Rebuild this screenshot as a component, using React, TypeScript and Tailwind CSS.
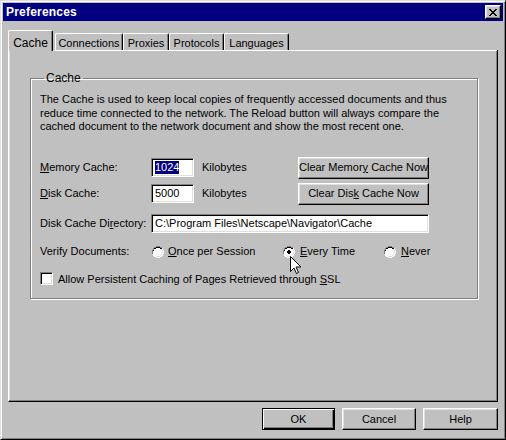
import React from 'react';

const raised =
  'border border-t-white border-l-white border-r-black border-b-black shadow-[inset_-1px_-1px_0_#808080,inset_1px_1px_0_#dfdfdf]';
const sunken =
  'border border-t-[#808080] border-l-[#808080] border-r-white border-b-white shadow-[inset_1px_1px_0_#000,inset_-1px_-1px_0_#dfdfdf]';

const U = ({ children }: { children: React.ReactNode }) => <span className="underline underline-offset-[1px]">{children}</span>;

const Radio = ({ checked }: { checked?: boolean }) => (
  <svg width="12" height="12" viewBox="0 0 12 12" className="shrink-0">
    <path d="M4 0h4v1h2v1h1v2h1v4h-1v2h-1v1H8v1H4v-1H2v-1H1V8H0V4h1V2h1V1h2z" fill="#fff" />
    <path d="M4 0h4v1h2v1H8V1H4v1H2v2H1v4H0V4h1V2h1V1h2z" fill="#808080" />
    <path d="M4 1h4v1h2v1H8V2H4v1H2v2H1v3H1V4h1V2h2z" fill="#000" />
    <path d="M10 2h1v2h-1zM11 4h1v4h-1zM10 8h1v2h-1zM8 10h2v1H8zM4 11h4v1H4zM2 10h2v1H2z" fill="#fff" />
    <path d="M9 3h1v1h-1zM10 4h1v4h-1zM9 8h1v1h-1zM8 9h1v1H8zM4 10h4v1H4zM3 9h1v1H3z" fill="#dfdfdf" />
    {checked && <path d="M5 4h2v1h1v2H7v1H5V7H4V5h1z" fill="#000" />}
  </svg>
);

const Btn = ({ children, className = '' }: { children: React.ReactNode; className?: string }) => (
  <button className={`${raised} bg-[#c0c0c0] h-[22px] flex items-center justify-center text-black ${className}`}>
    {children}
  </button>
);

const tabs = [
  { name: 'Cache', w: 'w-[45px]' },
  { name: 'Connections', w: 'w-[68px]' },
  { name: 'Proxies', w: 'w-[46px]' },
  { name: 'Protocols', w: 'w-[55px]' },
  { name: 'Languages', w: 'w-[65px]' },
];

export default function App() {
  return (
    <div
      className="w-[506px] h-[440px] bg-[#c0c0c0] flex flex-col border border-t-[#dfdfdf] border-l-[#dfdfdf] border-r-black border-b-black shadow-[inset_1px_1px_0_#fff,inset_-1px_-1px_0_#808080] p-[2px] text-[11px] text-black select-none"
      style={{ fontFamily: '"Liberation Sans", Arial, sans-serif' }}
    >
      {/* title bar */}
      <div className="h-[18px] bg-[#000080] flex items-center justify-between pl-[3px] pr-[2px]">
        <span className="text-white font-bold text-[12px] tracking-[0.2px]">Preferences</span>
        <button className={`${raised} bg-[#c0c0c0] w-[16px] h-[14px] flex items-center justify-center`}>
          <svg width="8" height="7" viewBox="0 0 8 7">
            <path d="M0 0h2v1h1v1h2V1h1V0h2v1H7v1H6v1H5v1h1v1h1v1h1v1H6V6H5V5H3v1H2v1H0V6h1V5h1V4h1V3H2V2H1V1H0z" fill="#000" />
          </svg>
        </button>
      </div>

      {/* tabs */}
      <div className="flex items-end h-[29px] pl-[5px] pt-[8px] relative z-10">
        {tabs.map((t, i) =>
          i === 0 ? (
            <div
              key={t.name}
              className={`${t.w} h-[21px] mb-[-1px] bg-[#c0c0c0] border-t border-l border-r border-t-white border-l-white border-r-black shadow-[inset_-1px_0_0_#808080] rounded-t-[2px] flex items-start justify-center pt-[3px] text-[12px]`}
            >
              {t.name}
            </div>
          ) : (
            <div
              key={t.name}
              className={`${t.w} h-[17px] bg-[#c0c0c0] border-t border-l border-r border-t-white border-l-white border-r-black shadow-[inset_-1px_0_0_#808080] rounded-t-[2px] flex items-start justify-center pt-[1px] text-[11px] ${i === 1 ? 'ml-[2px]' : ''}`}
            >
              {t.name}
            </div>
          )
        )}
      </div>

      {/* tab panel */}
      <div className={`${raised} mx-[5px] h-[352px] bg-[#c0c0c0] border-t-0 pt-[24px] px-[21px] relative`}>
        <div className="absolute left-[46px] right-0 top-0 h-px bg-white" />
        <div className="absolute left-0 w-[1px] top-0 h-px bg-white" />
        {/* group box */}
        <fieldset className="border border-[#808080] shadow-[1px_1px_0_#fff,inset_1px_1px_0_#fff] h-[227px] w-[448px] px-[9px] pt-0 mt-[-2px]">
          <legend className="px-[2px] ml-[4px] text-[12px] leading-[12px]">Cache</legend>
          <p className="text-[11px] leading-[13.5px] mt-[9px]">
            The Cache is used to keep local copies of frequently accessed documents and thus
            <br />
            reduce time connected to the network. The Reload button will always compare the
            <br />
            cached document to the network document and show the most recent one.
          </p>

          <div className="mt-[23px] flex items-center w-[389px]">
            <span className="w-[111px]">
              <U>M</U>emory Cache:
            </span>
            <div className={`${sunken} bg-white w-[43px] h-[19px] flex items-center px-[3px]`}>
              <span className="bg-[#000080] text-white leading-[13px]">1024</span>
            </div>
            <span className="ml-[8px] flex-1">Kilobytes</span>
            <Btn className="w-[131px]">
              Clear Memor<U>y</U>&nbsp;Cache Now
            </Btn>
          </div>

          <div className="mt-[4px] flex items-center w-[389px]">
            <span className="w-[111px]">
              <U>D</U>isk Cache:
            </span>
            <div className={`${sunken} bg-white w-[43px] h-[19px] flex items-center px-[3px]`}>
              <span className="leading-[13px]">5000</span>
            </div>
            <span className="ml-[8px] flex-1">Kilobytes</span>
            <Btn className="w-[131px]">
              Clear Dis<U>k</U>&nbsp;Cache Now
            </Btn>
          </div>

          <div className="mt-[9px] flex items-center">
            <span className="w-[111px]">
              Disk Cache Di<U>r</U>ectory:
            </span>
            <div className={`${sunken} bg-white w-[278px] h-[19px] flex items-center px-[3px]`}>
              C:\Program Files\Netscape\Navigator\Cache
            </div>
          </div>

          <div className="mt-[12px] flex items-center h-[14px]">
            <span className="w-[112px]">Verify Documents:</span>
            <div className="w-[131px] flex items-center gap-[4px]">
              <Radio />
              <span>
                <U>O</U>nce per Session
              </span>
            </div>
            <div className="w-[101px] flex items-center gap-[5px]">
              <Radio checked />
              <span>
                <U>E</U>very Time
              </span>
            </div>
            <div className="flex items-center gap-[5px]">
              <Radio />
              <span>
                <U>N</U>ever
              </span>
            </div>
          </div>

          <div className="mt-[12px] flex items-center gap-[5px]">
            <div className={`${sunken} bg-white w-[13px] h-[13px]`} />
            <span>
              Allow Persistent Caching of Pages Retrieved through <U>S</U>SL
            </span>
          </div>
        </fieldset>
      </div>

      {/* bottom buttons */}
      <div className="flex justify-end gap-[7px] mt-[6px] pr-[5px]">
        <button className="w-[73px] h-[22px] border border-black bg-[#c0c0c0] flex items-center justify-center shadow-[inset_1px_1px_0_#fff,inset_-1px_-1px_0_#000,inset_-2px_-2px_0_#808080]">
          OK
        </button>
        <Btn className="w-[74px]">Cancel</Btn>
        <Btn className="w-[75px]">Help</Btn>
      </div>

      {/* mouse pointer */}
      <svg width="12" height="19" viewBox="0 0 12 19" className="absolute left-[290px] top-[256px] z-20">
        <path d="M0.5 0.5v15l3.5-3.5 2.5 5.5 2-1-2.5-5.5h5z" fill="#fff" stroke="#000" strokeWidth="1" />
      </svg>
    </div>
  );
}
